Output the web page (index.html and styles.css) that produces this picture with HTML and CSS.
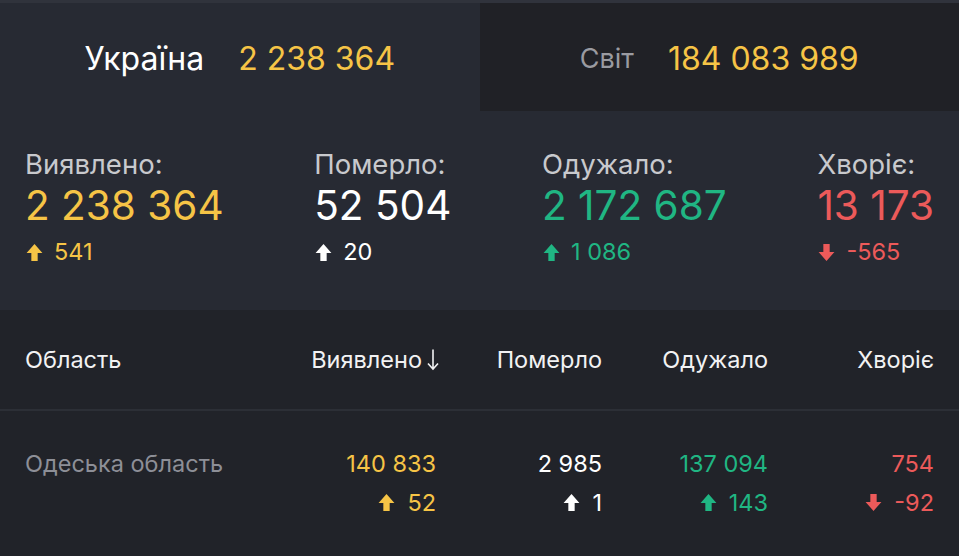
FILE: index.html
```html
<!DOCTYPE html>
<html lang="uk">
<head>
<meta charset="utf-8">
<title>COVID-19</title>
<link rel="stylesheet" href="styles.css">
</head>
<body>
<div class="app">
  <nav class="tabs">
    <div class="tab tab-active"><span class="tab-label">Україна</span><span class="tab-num">2 238 364</span></div>
    <div class="tab tab-inactive"><span class="tab-label">Світ</span><span class="tab-num">184 083 989</span></div>
  </nav>
  <section class="stats">
    <div class="stat">
      <div class="stat-label">Виявлено:</div>
      <div class="stat-num yellow">2 238 364</div>
      <div class="stat-delta yellow"><svg class="arr" viewBox="0 0 16 18"><path d="M8 1L15.5 9.5H11V17H5V9.5H0.5Z" fill="currentColor"/></svg><span>541</span></div>
    </div>
    <div class="stat">
      <div class="stat-label">Померло:</div>
      <div class="stat-num white">52 504</div>
      <div class="stat-delta white"><svg class="arr" viewBox="0 0 16 18"><path d="M8 1L15.5 9.5H11V17H5V9.5H0.5Z" fill="currentColor"/></svg><span>20</span></div>
    </div>
    <div class="stat">
      <div class="stat-label">Одужало:</div>
      <div class="stat-num green">2 172 687</div>
      <div class="stat-delta green"><svg class="arr" viewBox="0 0 16 18"><path d="M8 1L15.5 9.5H11V17H5V9.5H0.5Z" fill="currentColor"/></svg><span>1 086</span></div>
    </div>
    <div class="stat">
      <div class="stat-label">Хворіє:</div>
      <div class="stat-num red">13 173</div>
      <div class="stat-delta red"><svg class="arr" viewBox="0 0 16 18"><path d="M8 17L15.5 8.5H11V1H5V8.5H0.5Z" fill="currentColor"/></svg><span>-565</span></div>
    </div>
  </section>
  <section class="table">
    <div class="thead">
      <div class="th th-name">Область</div>
      <div class="th">Виявлено<svg class="sort" viewBox="0 0 12 22"><path d="M6 1V20M1 15L6 20.5L11 15" fill="none" stroke="currentColor" stroke-width="1.6"/></svg></div>
      <div class="th">Померло</div>
      <div class="th">Одужало</div>
      <div class="th">Хворіє</div>
    </div>
    <div class="trow">
      <div class="td td-name">Одеська область</div>
      <div class="td yellow"><div>140 833</div><div class="td-delta"><svg class="arr" viewBox="0 0 16 18"><path d="M8 1L15.5 9.5H11V17H5V9.5H0.5Z" fill="currentColor"/></svg><span>52</span></div></div>
      <div class="td white"><div>2 985</div><div class="td-delta"><svg class="arr" viewBox="0 0 16 18"><path d="M8 1L15.5 9.5H11V17H5V9.5H0.5Z" fill="currentColor"/></svg><span>1</span></div></div>
      <div class="td green"><div>137 094</div><div class="td-delta"><svg class="arr" viewBox="0 0 16 18"><path d="M8 1L15.5 9.5H11V17H5V9.5H0.5Z" fill="currentColor"/></svg><span>143</span></div></div>
      <div class="td red"><div>754</div><div class="td-delta"><svg class="arr" viewBox="0 0 16 18"><path d="M8 17L15.5 8.5H11V1H5V8.5H0.5Z" fill="currentColor"/></svg><span>-92</span></div></div>
    </div>
  </section>
</div>
</body>
</html>
```
FILE: styles.css
```css
* { box-sizing: border-box; }
html, body { margin: 0; padding: 0; }
body {
  background: #212329;
  font-family: Inter, "Noto Sans", sans-serif;
  color: #fff;
  width: 959px;
  height: 556px;
  overflow: hidden;
}
.app { border-top: 3px solid #30333c; }
.yellow { color: #f6c446; }
.white { color: #ffffff; }
.green { color: #20b683; }
.red { color: #ec5a5a; }

.tabs { display: flex; height: 108px; }
.tab {
  flex: 1;
  display: flex;
  align-items: center;
  justify-content: center;
  gap: 34px;
  font-size: 32px;
  padding-top: 2px;
}
.tab-active { background: #272a33; }
.tab-inactive { background: #202126; }
.tab-active .tab-label { color: #ffffff; }
.tab-inactive .tab-label { color: #9a9ba1; font-size: 27px; }
.tab-num { color: #f6c446; }

.stats {
  background: #272a33;
  height: 199px;
  display: flex;
  justify-content: space-between;
  padding: 36px 25px 0;
}
.stat-label { font-size: 27.5px; line-height: 34px; color: #c8c9cd; }
.stat-num { font-size: 40.5px; line-height: 50px; margin-top: 0; }
.stat-delta {
  display: flex;
  align-items: center;
  gap: 11px;
  font-size: 23.5px;
  line-height: 30px;
  margin-top: 6px;
  padding-left: 1px;
}
.arr { width: 17px; height: 19px; display: block; }

.table { background: #212329; }
.thead, .trow {
  display: grid;
  grid-template-columns: 1fr repeat(4, 166px);
  padding: 0 25px;
}
.thead {
  height: 101px;
  align-items: center;
  border-bottom: 2px solid #2c2f36;
  font-size: 23.5px;
  color: #f2f2f3;
}
.th { text-align: right; display: flex; justify-content: flex-end; align-items: center; }
.th-name { justify-content: flex-start; }
.sort { width: 12px; height: 23px; margin-left: 5px; margin-right: -3px; }

.trow { padding-top: 33px; font-size: 23.5px; line-height: 39px; }
.td { display: flex; flex-direction: column; align-items: flex-end; }
.td-name { align-items: flex-start; color: #8d8f97; }
.td-delta { display: flex; align-items: center; gap: 12px; }
```
